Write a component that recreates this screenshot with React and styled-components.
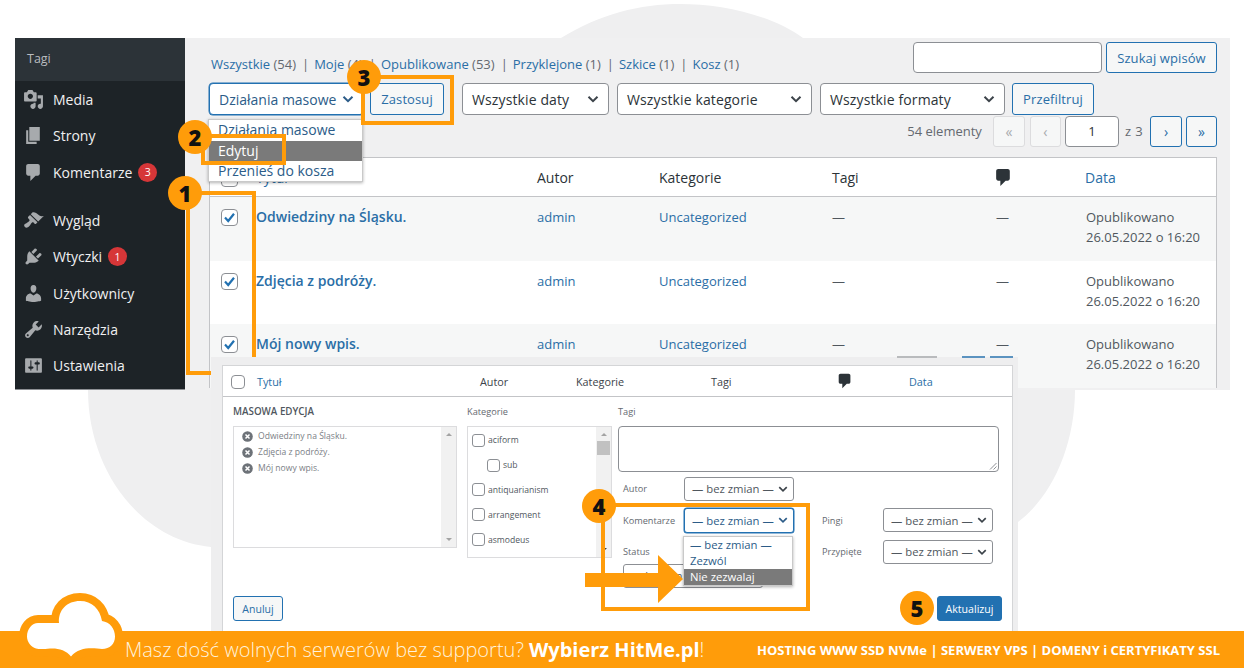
import React from "react";
import styled, { createGlobalStyle } from "styled-components";

const ORANGE = "#ff9c0a";
const BLUE = "#2a6ea6";
const TEXT = "#50575e";

const Global = createGlobalStyle`
  html, body { margin: 0; padding: 0; background: #fff; }
  * { box-sizing: border-box; }
  body { font-family: "Open Sans", "Liberation Sans", sans-serif; }
`;

const Page = styled.div`
  position: relative; width: 1244px; height: 668px; overflow: hidden; background: #fff;
  display: flex; flex-direction: column;
`;
const BgShape = styled.svg`position: absolute; left: 0; top: 0; width: 1244px; height: 668px;`;

/* ---------- admin screenshot ---------- */
const Admin = styled.div`
  position: relative; margin: 38px 0 0 15px; width: 1215px; height: 352px; display: flex; overflow: hidden;
`;
const Sidebar = styled.nav`width: 170px; flex: none; background: #1d2327; color: #f0f0f1; border-bottom: 1px solid #8d9094;`;
const SideTitle = styled.div`
  height: 43px; background: #2c3338; color: #b9bcbf; font-size: 12.5px; line-height: 41px; padding-left: 12px;
`;
const SideMenu = styled.ul`list-style: none; margin: 0; padding: 0;`;
const SideItem = styled.li`
  height: 36.45px; display: flex; align-items: center; padding-left: 8px; font-size: 14px; gap: 9px;
  margin-top: ${p => (p.$sep ? "11.6px" : "0")};
  svg { width: 21px; height: 21px; fill: #a7aaad; flex: none; }
`;
const Badge = styled.span`
  width: 19px; height: 19px; border-radius: 50%; background: #d63638; color: #fff; font-size: 10.5px;
  display: inline-flex; align-items: center; justify-content: center; margin-left: -3px;
`;
const Main = styled.main`flex: 1; background: #f0f0f1; padding: 4px 13px 0 24px; color: ${TEXT};`;
const TopRow = styled.div`display: flex; justify-content: space-between; height: 31px;`;
const Views = styled.div`align-self: flex-end; margin-left: 2px; font-size: 13px; line-height: 18px; white-space: pre; color: #646970;`;
const Sep = styled.span`margin: 0 5px 0 6px;`;
const Link = styled.a`color: ${BLUE}; text-decoration: none;`;
const Search = styled.div`display: flex; gap: 4px;`;
const Input = styled.div`
  width: ${p => p.$w}px; height: ${p => p.$h || 31}px; background: #fff; border: 1px solid #8c8f94; border-radius: 4px;
  font-size: 13px; color: #2c3338; display: flex; align-items: center; justify-content: center; flex: none;
`;
const PageInput = styled(Input)`margin-left: 4px;`;
const Button = styled.div`
  width: ${p => p.$w}px; height: ${p => p.$h || 32}px; border: 1px solid #2271b1; border-radius: 3px; background: #f6f7f7;
  color: ${BLUE}; font-size: 13px; letter-spacing: .1px; display: flex; align-items: center; justify-content: center; flex: none;
`;
const Toolbar = styled.div`display: flex; margin-top: 10px; height: 32px; align-items: stretch;`;
const Select = styled.div`
  width: ${p => p.$w}px; margin-left: ${p => p.$ml || 0}px; flex: none; background: #fff;
  border: ${p => (p.$focus ? "1.5px solid #2271b1" : "1px solid #8c8f94")}; border-radius: 4px;
  box-shadow: ${p => (p.$focus ? "0 0 0 .5px #2271b1" : "none")};
  color: ${p => (p.$focus ? "#2c5c88" : "#2c3338")}; font-size: 14px; padding: 0 9px;
  letter-spacing: ${p => (p.$focus ? "0" : ".12px")};
  display: flex; align-items: center; justify-content: space-between; white-space: nowrap;
  svg { flex: none; }
`;
const ToolGap = styled.div`width: ${p => p.$w}px; flex: none;`;
const Pager = styled.div`display: flex; justify-content: flex-end; align-items: center; height: 32px; font-size: 13px; color: #646970;`;
const PageBtn = styled.div`
  width: ${p => p.$w || 32}px; height: 31px; border-radius: 3px; margin-left: ${p => p.$ml}px; font-size: 14px;
  display: flex; align-items: center; justify-content: center; flex: none;
  border: 1px solid ${p => (p.$off ? "#dcdcde" : "#2271b1")};
  color: ${p => (p.$off ? "#a7aaad" : BLUE)}; background: #f6f7f7;
`;
const PagerOf = styled.span`margin: 0 7px 0 6px; letter-spacing: .4px;`;
const Table = styled.div`margin-top: 10px; background: #fff; border: 1px solid #c3c4c7; border-bottom: 0;`;
const ColsMain = "46px 281px 122px 173px 164px 89px 1fr";
const HeadRow = styled.div`
  display: grid; grid-template-columns: ${ColsMain}; height: 39px; padding-top: 1px; align-items: center; border-bottom: 1px solid #c3c4c7;
  font-size: 14px; color: #2c3338;
`;
const HeadIcon = styled.span`display: flex; margin-left: -3px; margin-top: -1px;`;
const Row = styled.div`
  display: grid; grid-template-columns: ${ColsMain}; height: 63.6px; padding-top: 10px; font-size: 13px; line-height: 20px;
  background: ${p => (p.$alt ? "#f6f7f7" : "#fff")}; color: ${TEXT}; align-items: start;
`;
const CheckCell = styled.div`padding: 2px 0 0 11px;`;
const Box = styled.span`
  display: flex; align-items: center; justify-content: center; width: ${p => p.$s || 17}px; height: ${p => p.$s || 17}px;
  background: #fff; border: 1px solid #8c8f94; border-radius: ${p => p.$r || 4}px; flex: none;
`;
const PostTitle = styled.a`color: ${BLUE}; font-weight: 600; font-size: 14px;`;
const DateCell = styled.div`padding-left: 1px; white-space: nowrap;`;

/* ---------- bulk edit overlay ---------- */
const Overlay = styled.div`
  position: absolute; left: 211px; top: 357px; width: 807px; height: 274px; background: #eeeeef; padding: 8px 5px 0 11px;
`;
const Peek = styled.span`
  position: absolute; top: -1px; left: ${p => p.$x}px; width: ${p => p.$w}px; height: 1.5px; background: ${p => p.$c};
`;
const Panel = styled.section`
  height: 100%; background: #fff; border: 1px solid #d4d5d7; border-bottom: 0; display: flex; flex-direction: column; color: ${TEXT};
`;
const PanelHead = styled.div`
  display: grid; grid-template-columns: 34px 223px 96px 135px 134px 64px 1fr; height: 31px; padding-top: 1px; align-items: center;
  border-bottom: 1px solid #c3c4c7; font-size: 10.8px; color: #3c434a; flex: none;
`;
const PanelHeadIcon = styled.span`display: flex; margin-left: -9px; margin-top: -1px;`;
const PanelCheck = styled.div`padding-left: 8px;`;
const PanelBody = styled.div`
  display: grid; grid-template-columns: 224px 145px 381px; column-gap: 10px; padding: 9px 0 0 10px; flex: 1;
`;
const Column = styled.div`display: flex; flex-direction: column; &:last-child { margin: 0 4px 0 -4px; }`;
const Caption = styled.div`font-size: 9.2px; line-height: 12px; height: 20px; color: #646970; white-space: nowrap;`;
const StrongCaption = styled(Caption)`font-weight: 600; font-size: 9.8px; color: ${TEXT};`;
const ListBox = styled.div`
  height: ${p => p.$h}px; border: 1px solid #dcdcde; display: flex; justify-content: space-between; background: #fff;
`;
const TitleItems = styled.ul`list-style: none; margin: 0; padding: 1px 0 0 8px; font-size: 8.6px; color: #7b8086;`;
const TitleItem = styled.li`height: 16px; display: flex; align-items: center; gap: 5px; white-space: nowrap;`;
const Scrollbar = styled.div`
  width: 15px; background: #f1f1f1; display: flex; flex-direction: column; align-items: center; padding-top: 6px; position: relative;
`;
const Thumb = styled.div`width: 13px; height: 14px; background: #c1c1c1; margin-top: 5px;`;
const ArrowUp = styled.div`width: 0; height: 0; border: 3px solid transparent; border-top: 0; border-bottom: 3px solid #a3a3a3;`;
const ArrowDown = styled.div`
  position: absolute; bottom: 6px; width: 0; height: 0; border: 3px solid transparent; border-bottom: 0;
  border-top: 3px solid ${p => p.$c || "#a3a3a3"};
`;
const CatItems = styled.ul`list-style: none; margin: 0; padding: 1px 0 0 4px; font-size: 8.6px; color: #50575e;`;
const CatItem = styled.li`
  height: 24.8px; display: flex; align-items: center; gap: 3px; padding-left: ${p => (p.$sub ? 15 : 0)}px;
`;
const TagsArea = styled.div`
  position: relative; height: 46px; border: 1px solid #8c8f94; border-radius: 4px; background: #fff; flex: none;
  svg { position: absolute; right: 1px; bottom: 1px; }
`;
const FormGrid = styled.div`
  display: grid; grid-template-columns: 66px 110px 28px 61px 110px; grid-auto-rows: 25px; row-gap: 6.5px; margin-top: 4px; align-items: center;
`;
const FormLabel = styled.div`font-size: 9.2px; color: #646970; padding-left: ${p => p.$pad || 0}px; grid-column: ${p => p.$col || "auto"};`;
const SmallSelect = styled.div`
  width: ${p => p.$w || 110}px; height: ${p => (p.$focus ? 25 : 24)}px; background: #fff; border-radius: 3px; padding: 0 5px 0 7px; font-size: 11.3px;
  border: ${p => (p.$focus ? "1px solid #2271b1" : "1px solid #8c8f94")};
  box-shadow: ${p => (p.$focus ? "0 0 0 .5px #2271b1" : "none")};
  color: ${p => (p.$focus ? "#2c5c88" : "#50575e")}; display: flex; align-items: center; justify-content: space-between; white-space: nowrap;
  grid-column: ${p => p.$col || "auto"}; margin: ${p => p.$mt || 0}px 0 0 ${p => p.$ml || 0}px;
`;
const PanelFoot = styled.div`display: flex; justify-content: space-between; padding: 0 10px 10px 10px; flex: none;`;
const PrimaryBtn = styled(Button)`background: #2271b1; color: #fff; font-size: 10.6px; letter-spacing: 0;`;
const SmallBtn = styled(Button)`font-size: 10.5px; letter-spacing: 0;`;

/* ---------- popups and annotations ---------- */
const Menu = styled.div`
  position: absolute; left: ${p => p.$x}px; top: ${p => p.$y}px; width: ${p => p.$w}px; background: #fff;
  border: 1px solid #c9c9c9; box-shadow: 0 1px 3px rgba(0,0,0,.3); color: #2c5c88; font-size: ${p => p.$fs}px;
`;
const MenuOpt = styled.div`
  height: ${p => p.$h}px; line-height: ${p => p.$h}px; padding-left: ${p => p.$pad}px; white-space: nowrap;
  background: ${p => (p.$on ? "#7a7a7a" : "transparent")}; color: ${p => (p.$on ? "#fff" : "inherit")};
`;
const Frame = styled.div`
  position: absolute; left: ${p => p.$x}px; top: ${p => p.$y}px; width: ${p => p.$w}px; height: ${p => p.$h}px;
  border: 4px solid ${ORANGE}; ${p => (p.$open ? "border-bottom: 0;" : "")}
`;
const Stub = styled.div`
  position: absolute; left: ${p => p.$x}px; top: ${p => p.$y}px; width: ${p => p.$w}px; height: ${p => p.$h}px; background: ${ORANGE};
`;
const Marker = styled.div`
  position: absolute; left: ${p => p.$x - 17}px; top: ${p => p.$y - 17}px; width: 34px; height: 34px; border-radius: 50%;
  background: ${ORANGE}; color: #111; font-size: 22px; font-weight: 800; display: flex; align-items: center; justify-content: center;
`;
const ArrowSvg = styled.svg`position: absolute; left: 585px; top: 555px;`;

/* ---------- footer ---------- */
const Footer = styled.footer`
  position: relative; margin-top: auto; height: 37px; background: ${ORANGE}; color: #fff;
  display: flex; align-items: center; justify-content: space-between; padding: 0 24px 0 125px; white-space: nowrap;
`;
const Promo = styled.div`font-size: 20px; font-weight: 300; color: #fff3dd;`;
const PromoStrong = styled.strong`font-weight: 700; color: #fff;`;
const Offer = styled.div`font-size: 13px; font-weight: 700;`;
const CloudLogo = styled.svg`position: absolute; left: 0; top: -39px;`;

const Chevron = ({ s = 12, c = "#3c434a", w = 2 }) => (
  <svg width={s} height={s} viewBox="0 0 12 12" fill="none" stroke={c} strokeWidth={w}><path d="M1.5 3.8 6 8.2l4.5-4.4" /></svg>
);
const ic = {
  media: "M13 11V4c0-.55-.45-1-1-1h-1.67L9 1H5L3.67 3H2c-.55 0-1 .45-1 1v7c0 .55.45 1 1 1h10c.55 0 1-.45 1-1zM7 4.5c1.38 0 2.5 1.12 2.5 2.5S8.38 9.5 7 9.5 4.5 8.38 4.5 7 5.62 4.5 7 4.5zM14 6h5v10.5c0 1.38-1.12 2.5-2.5 2.5S14 17.88 14 16.5s1.12-2.5 2.5-2.5c.17 0 .34.02.5.05V9h-3V6zm-4 8.05V13h2v3.5c0 1.38-1.12 2.5-2.5 2.5S7 17.88 7 16.5 8.12 14 9.5 14c.17 0 .34.02.5.05z",
  page: "M6 15V2h10v13H6zm-1 1h8v2H3V5h2v11z",
  comments: "M5 2h9c1.1 0 2 .9 2 2v7c0 1.1-.9 2-2 2h-2l-5 5v-5H5c-1.1 0-2-.9-2-2V4c0-1.1.9-2 2-2z",
  appearance: "M14.48 11.06L7.41 3.99l1.5-1.5c.5-.56 2.3-.47 3.51.32 1.21.8 1.43 1.28 2.91 2.1 1.18.64 2.45 1.26 4.45.85zm-.71.71L6.7 4.7 4.93 6.47c-.39.39-.39 1.02 0 1.41l1.06 1.06c.39.39.39 1.03 0 1.42-.6.6-1.43 1.11-2.21 1.69-.35.26-.7.53-1.01.84C1.43 13.23.4 14.75 1.8 16.15s2.92.37 4.26-.96c.31-.31.58-.66.84-1.01.58-.78 1.09-1.61 1.69-2.21.39-.39 1.03-.39 1.42 0l1.06 1.06c.39.39 1.02.39 1.41 0z",
  plugins: "M13.11 4.36L9.87 7.6 8 5.73l3.24-3.24c.35-.34 1.05-.2 1.56.32.52.51.66 1.21.31 1.55zm-8 1.77l.91-1.12 9.01 9.01-1.19.84c-.71.71-2.63 1.16-3.82 1.16H6.14L4.9 17.26c-.59.59-1.54.59-2.12 0-.59-.58-.59-1.53 0-2.12l1.24-1.24v-3.88c0-1.13.4-3.19 1.09-3.89zm7.26 3.97l3.24-3.24c.34-.35 1.04-.21 1.55.31.52.51.66 1.21.31 1.55l-3.24 3.25z",
  users: "M10 9.25c-2.27 0-2.73-3.44-2.73-3.44C7 4.02 7.82 2 9.97 2c2.16 0 2.98 2.02 2.71 3.81 0 0-.41 3.44-2.68 3.44zm0 2.57L12.72 10c2.39 0 4.52 2.33 4.52 4.53v2.49s-3.65 1.13-7.24 1.13c-3.65 0-7.24-1.13-7.24-1.13v-2.49c0-2.25 1.94-4.48 4.47-4.48z",
  tools: "M16.68 9.77c-1.34 1.34-3.3 1.67-4.95.99l-5.41 6.52c-.99.99-2.59.99-3.58 0s-.99-2.59 0-3.57l6.52-5.42c-.68-1.65-.35-3.61.99-4.95 1.28-1.28 3.12-1.62 4.72-1.06l-2.89 2.89 2.82 2.82 2.89-2.89c.56 1.6.22 3.44-1.11 4.67zM3.81 16.21c.4.39 1.04.39 1.43 0 .4-.4.4-1.04 0-1.43-.39-.4-1.03-.4-1.43 0-.39.39-.39 1.03 0 1.43z",
  settings: "M18 16V4c0-.55-.45-1-1-1H3c-.55 0-1 .45-1 1v12c0 .55.45 1 1 1h14c.55 0 1-.45 1-1zM8 11h1c.55 0 1 .45 1 1s-.45 1-1 1H8v1.5c0 .28-.22.5-.5.5s-.5-.22-.5-.5V13H6c-.55 0-1-.45-1-1s.45-1 1-1h1V5.5c0-.28.22-.5.5-.5s.5.22.5.5V11zm5-2h-1c-.55 0-1-.45-1-1s.45-1 1-1h1V5.5c0-.28.22-.5.5-.5s.5.22.5.5V7h1c.55 0 1 .45 1 1s-.45 1-1 1h-1v5.5c0 .28-.22.5-.5.5s-.5-.22-.5-.5V9z",
};
const Dash = ({ d, size, color }) => (
  <svg width={size} height={size} viewBox="0 0 20 20" fill={color}><path d={d} /></svg>
);
const Tick = () => (
  <svg width="13" height="13" viewBox="0 0 13 13" fill="none" stroke="#2271b1" strokeWidth="2.2"><path d="M2 6.6 5.2 10 11 2.8" /></svg>
);
const RemoveIcon = () => (
  <svg width="11" height="11" viewBox="0 0 11 11" style={{ flex: "none" }}>
    <circle cx="5.5" cy="5.5" r="5.3" fill="#6d7278" />
    <path d="M3.5 3.5l4 4m0-4l-4 4" stroke="#fff" strokeWidth="1.5" />
  </svg>
);

const menu = [
  { i: "media", t: "Media" },
  { i: "page", t: "Strony" },
  { i: "comments", t: "Komentarze", b: 3 },
  { i: "appearance", t: "Wygląd", sep: true },
  { i: "plugins", t: "Wtyczki", b: 1 },
  { i: "users", t: "Użytkownicy" },
  { i: "tools", t: "Narzędzia" },
  { i: "settings", t: "Ustawienia" },
];
const views = [["Wszystkie", 54], ["Moje", 4], ["Opublikowane", 53], ["Przyklejone", 1], ["Szkice", 1], ["Kosz", 1]];
const posts = ["Odwiedziny na Śląsku.", "Zdjęcia z podróży.", "Mój nowy wpis."];
const cats = [["aciform"], ["sub", true], ["antiquarianism"], ["arrangement"], ["asmodeus"]];
const NOCHANGE = "— bez zmian —";

export default function App() {
  return (
    <Page>
      <Global />
      <BgShape viewBox="0 0 1244 668">
        <path fill="#efeff0" d="M561 38C600 14 640 4 680 4c40 0 90 10 123 34h272v352c0 55-23 107-57 132v109H211v-84c-71-7-123-77-123-157z" />
      </BgShape>

      <Admin>
        <Sidebar>
          <SideTitle>Tagi</SideTitle>
          <SideMenu>
            {menu.map(m => (
              <SideItem key={m.t} $sep={m.sep}>
                <svg viewBox="0 0 20 20"><path d={ic[m.i]} /></svg>
                {m.t}
                {m.b && <Badge>{m.b}</Badge>}
              </SideItem>
            ))}
          </SideMenu>
        </Sidebar>
        <Main>
          <TopRow>
            <Views>
              {views.map(([t, n], i) => (
                <React.Fragment key={t}>
                  {i > 0 && <Sep>|</Sep>}
                  <Link>{t}</Link> ({n})
                </React.Fragment>
              ))}
            </Views>
            <Search>
              <Input $w={189} />
              <Button $w={111} $h={31}>Szukaj wpisów</Button>
            </Search>
          </TopRow>
          <Toolbar>
            <Select $w={155} $focus>Działania masowe <Chevron c="#2c5c88" /></Select>
            <ToolGap $w={6} />
            <Button $w={74}>Zastosuj</Button>
            <Select $w={147} $ml={18}>Wszystkie daty <Chevron /></Select>
            <Select $w={195} $ml={8}>Wszystkie kategorie <Chevron /></Select>
            <Select $w={185} $ml={8}>Wszystkie formaty <Chevron /></Select>
            <ToolGap $w={7} />
            <Button $w={82}>Przefiltruj</Button>
          </Toolbar>
          <Pager>
            54 elementy
            <PageBtn $off $ml={11}>«</PageBtn>
            <PageBtn $off $ml={5} $w={31}>‹</PageBtn>
            <PageInput $w={54}>1</PageInput>
            <PagerOf>z 3</PagerOf>
            <PageBtn $ml={0}>›</PageBtn>
            <PageBtn $ml={4} $w={31}>»</PageBtn>
          </Pager>
          <Table>
            <HeadRow>
              <CheckCell><Box /></CheckCell>
              <Link>Tytuł</Link>
              <span>Autor</span>
              <span>Kategorie</span>
              <span>Tagi</span>
              <HeadIcon><Dash d={ic.comments} size={21} color="#2c3338" /></HeadIcon>
              <Link>Data</Link>
            </HeadRow>
            {posts.map((t, i) => (
              <Row key={t} $alt={i % 2 === 0}>
                <CheckCell><Box><Tick /></Box></CheckCell>
                <PostTitle>{t}</PostTitle>
                <Link>admin</Link>
                <Link>Uncategorized</Link>
                <span>—</span>
                <span>—</span>
                <DateCell>Opublikowano<br />26.05.2022 o 16:20</DateCell>
              </Row>
            ))}
          </Table>
        </Main>
      </Admin>

      <Overlay>
        <Peek $x={686} $w={40} $c="#b9bbbd" />
        <Peek $x={751} $w={23} $c="#5b93c0" />
        <Peek $x={779} $w={23} $c="#5b93c0" />
        <Panel>
          <PanelHead>
            <PanelCheck><Box $s={14} /></PanelCheck>
            <Link>Tytuł</Link>
            <span>Autor</span>
            <span>Kategorie</span>
            <span>Tagi</span>
            <PanelHeadIcon><Dash d={ic.comments} size={18} color="#2c3338" /></PanelHeadIcon>
            <Link>Data</Link>
          </PanelHead>
          <PanelBody>
            <Column>
              <StrongCaption>MASOWA EDYCJA</StrongCaption>
              <ListBox $h={122}>
                <TitleItems>
                  {posts.map(t => <TitleItem key={t}><RemoveIcon />{t}</TitleItem>)}
                </TitleItems>
                <Scrollbar><ArrowUp /><ArrowDown /></Scrollbar>
              </ListBox>
            </Column>
            <Column>
              <Caption>Kategorie</Caption>
              <ListBox $h={132}>
                <CatItems>
                  {cats.map(([c, sub]) => (
                    <CatItem key={c} $sub={sub}><Box $s={13} $r={3} />{c}</CatItem>
                  ))}
                </CatItems>
                <Scrollbar><ArrowUp /><Thumb /><ArrowDown $c="#444" /></Scrollbar>
              </ListBox>
            </Column>
            <Column>
              <Caption>Tagi</Caption>
              <TagsArea>
                <svg width="8" height="8" viewBox="0 0 8 8" stroke="#8c8f94" strokeWidth="1"><path d="M1 7.5 7.5 1M4.5 7.5l3-3" /></svg>
              </TagsArea>
              <FormGrid>
                <FormLabel $pad={5}>Autor</FormLabel>
                <SmallSelect $col="2 / 3">{NOCHANGE} <Chevron s={10} /></SmallSelect>
                <FormLabel $pad={5} $col="1 / 2">Komentarze</FormLabel>
                <SmallSelect $focus>{NOCHANGE} <Chevron s={10} c="#2c5c88" /></SmallSelect>
                <FormLabel $col="4 / 5">Pingi</FormLabel>
                <SmallSelect>{NOCHANGE} <Chevron s={10} /></SmallSelect>
                <FormLabel $pad={5} $col="1 / 2">Status</FormLabel>
                <FormLabel $col="4 / 5">Przypięte</FormLabel>
                <SmallSelect>{NOCHANGE} <Chevron s={10} /></SmallSelect>
                <SmallSelect $col="1 / 4" $w={140} $ml={5} $mt={-15}>{NOCHANGE}</SmallSelect>
              </FormGrid>
            </Column>
          </PanelBody>
          <PanelFoot>
            <SmallBtn $w={50} $h={25}>Anuluj</SmallBtn>
            <PrimaryBtn $w={65} $h={25}>Aktualizuj</PrimaryBtn>
          </PanelFoot>
        </Panel>
      </Overlay>

      <Menu $x={208} $y={119} $w={155} $fs={14}>
        <MenuOpt $h={20.5} $pad={9}>Działania masowe</MenuOpt>
        <MenuOpt $h={20} $pad={9} $on>Edytuj</MenuOpt>
        <MenuOpt $h={20.5} $pad={9}>Przenieś do kosza</MenuOpt>
      </Menu>
      <Menu $x={683} $y={536} $w={110} $fs={11.3}>
        <MenuOpt $h={16} $pad={6}>{NOCHANGE}</MenuOpt>
        <MenuOpt $h={16} $pad={6}>Zezwól</MenuOpt>
        <MenuOpt $h={16} $pad={6} $on>Nie zezwalaj</MenuOpt>
      </Menu>

      <Frame $x={186} $y={191} $w={70} $h={166} $open />
      <Stub $x={186} $y={357} $w={4} $h={18} />
      <Stub $x={186} $y={371} $w={25} $h={4} />
      <Frame $x={201} $y={134} $w={85} $h={31} />
      <Frame $x={361} $y={75} $w={93} $h={50} />
      <Frame $x={601} $y={503} $w={209} $h={108} />
      <ArrowSvg width="98" height="48" viewBox="0 0 98 48">
        <path fill={ORANGE} d="M0 18h73V0l25 24-25 24V32H0z" />
      </ArrowSvg>
      <Marker $x={185} $y={193}>1</Marker>
      <Marker $x={195} $y={137}>2</Marker>
      <Marker $x={364} $y={77}>3</Marker>
      <Marker $x={599} $y={506}>4</Marker>
      <Marker $x={917} $y={608}>5</Marker>

      <Footer>
        <CloudLogo width="130" height="76" viewBox="0 0 130 76">
          <path
            fill="#fff" stroke={ORANGE} strokeWidth="16" paintOrder="stroke" strokeLinejoin="round"
            d="M71 64.5C66 58 58 56 50 56.500 44 57 40 57.500 36 56.500 31 55 27 50 27 44.500 27 37 32 31 38 31L59 31C58 18 67 9 80 9 92 9 100 17 102 29 110 30 115 37 115 44.500 115 52 110 57 102 57 94 56 79 54 71 64.500Z"
          />
        </CloudLogo>
        <Promo>
          Masz dość wolnych serwerów bez supportu? <PromoStrong>Wybierz HitMe.pl</PromoStrong>!
        </Promo>
        <Offer>HOSTING WWW SSD NVMe | SERWERY VPS | DOMENY i CERTYFIKATY SSL</Offer>
      </Footer>
    </Page>
  );
}
